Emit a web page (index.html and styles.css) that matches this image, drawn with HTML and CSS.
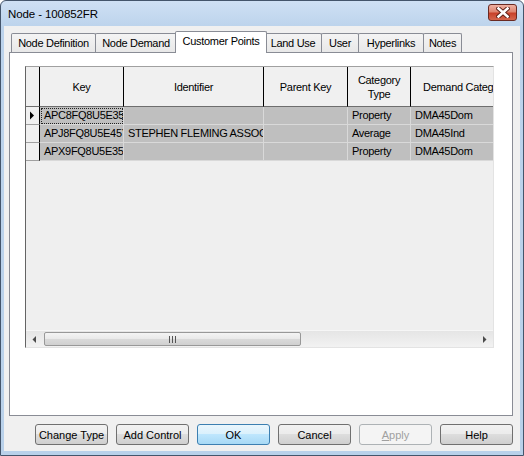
FILE: index.html
```html
<!DOCTYPE html>
<html>
<head>
<meta charset="utf-8">
<link rel="stylesheet" href="styles.css">
</head>
<body>
<div class="window">
  <div class="titlebar">
    <span class="title">Node - 100852FR</span>
    <div class="close">
      <svg width="14" height="11" viewBox="0 0 14 11"><path d="M2.5 1.5 L11.5 9.5 M11.5 1.5 L2.5 9.5" stroke="#5a1d14" stroke-width="4.4" stroke-linecap="square"/><path d="M2.5 1.5 L11.5 9.5 M11.5 1.5 L2.5 9.5" stroke="#fff" stroke-width="2.6" stroke-linecap="square"/></svg>
    </div>
  </div>
  <div class="face">
    <div class="tabstrip">
      <div class="tab t1">Node Definition</div>
      <div class="tab t2">Node Demand</div>
      <div class="tab active t3">Customer Points</div>
      <div class="tab t4">Land Use</div>
      <div class="tab t5">User</div>
      <div class="tab t6">Hyperlinks</div>
      <div class="tab t7">Notes</div>
    </div>
    <div class="page">
      <div class="grid">
        <div class="table">
          <div class="c h rh"></div>
          <div class="c h">Key</div>
          <div class="c h">Identifier</div>
          <div class="c h">Parent Key</div>
          <div class="c h">Category<br>Type</div>
          <div class="c h hl">Demand Category</div>

          <div class="c rh"><svg width="6" height="9" viewBox="0 0 6 9"><path d="M1 0.5 L5 4.5 L1 8.5 Z" fill="#000"/></svg></div>
          <div class="c d focus">APC8FQ8U5E35S</div>
          <div class="c d"></div>
          <div class="c d"></div>
          <div class="c d">Property</div>
          <div class="c d">DMA45Dom</div>

          <div class="c rh"></div>
          <div class="c d">APJ8FQ8U5E45Y</div>
          <div class="c d">STEPHEN FLEMING ASSOCIATES</div>
          <div class="c d"></div>
          <div class="c d">Average</div>
          <div class="c d">DMA45Ind</div>

          <div class="c rh"></div>
          <div class="c d">APX9FQ8U5E35T</div>
          <div class="c d"></div>
          <div class="c d"></div>
          <div class="c d">Property</div>
          <div class="c d">DMA45Dom</div>
        </div>
        <div class="filler"></div>
        <div class="hscroll">
          <div class="arrow"><svg width="5" height="7" viewBox="0 0 5 7"><path d="M4 0 L0.5 3.5 L4 7 Z" fill="#4a4a4a"/></svg></div>
          <div class="track">
            <div class="thumb"><svg width="7" height="7" viewBox="0 0 7 7"><path d="M0.5 0 V7 M3.5 0 V7 M6.5 0 V7" stroke="#555" stroke-width="1"/></svg></div>
          </div>
          <div class="arrow"><svg width="5" height="7" viewBox="0 0 5 7"><path d="M1 0 L4.5 3.5 L1 7 Z" fill="#4a4a4a"/></svg></div>
        </div>
      </div>
    </div>
    <div class="buttons">
      <button class="btn">Change Type</button>
      <button class="btn">Add Control</button>
      <button class="btn default">OK</button>
      <button class="btn">Cancel</button>
      <button class="btn disabled"><span class="u">A</span>pply</button>
      <button class="btn">Help</button>
    </div>
  </div>
</div>
</body>
</html>
```

FILE: styles.css
```css
html, body {
  margin: 0;
  padding: 0;
}
body {
  width: 524px;
  height: 456px;
  overflow: hidden;
  background: #ffffff;
  font-family: "Liberation Sans", Arial, sans-serif;
  font-size: 11px;
  color: #000;
}
.window {
  box-sizing: border-box;
  width: 524px;
  height: 456px;
  border: 1px solid #44556b;
  border-radius: 6px 6px 0 0;
  background: linear-gradient(#cfe0f4, #bcd3ec 26px, #b9d1ea);
  padding: 0 3px 4px 3px;
  display: flex;
  flex-direction: column;
}
.titlebar {
  height: 25px;
  display: flex;
  align-items: center;
  padding: 0 3px 0 4px;
}
.title {
  font-size: 11.5px;
  margin-top: 1px;
  letter-spacing: -0.1px;
}
.close {
  margin-left: auto;
  align-self: flex-start;
  margin-top: 3px;
  box-sizing: border-box;
  width: 29px;
  height: 17px;
  border: 1px solid #6a2a22;
  border-radius: 3px;
  background: linear-gradient(#eeb0a2 0%, #de8570 45%, #c8412a 55%, #d4674e 100%);
  display: flex;
  align-items: center;
  justify-content: center;
}
.face {
  flex: 1;
  background: #f0f0f0;
  display: flex;
  flex-direction: column;
  padding: 5px 7px 0 5px;
}
.tabstrip {
  height: 21px;
  display: flex;
  align-items: flex-end;
  padding-left: 2px;
  letter-spacing: -0.3px;
}
.tab {
  box-sizing: border-box;
  height: 19px;
  border: 1px solid #898c95;
  border-bottom: none;
  border-radius: 2px 2px 0 0;
  background: linear-gradient(#f4f4f4, #e8e8e8);
  text-align: center;
  line-height: 18px;
  margin-left: -1px;
  white-space: nowrap;
}
.t1 { width: 85px; margin-left: 0; }
.t2 { width: 82px; }
.t3 { width: 92px; }
.t4 { width: 58px; }
.t5 { width: 38px; }
.t6 { width: 66px; }
.t7 { width: 39px; }
.tab.active {
  height: 22px;
  background: #ffffff;
  margin-left: -2px;
  margin-right: -2px;
  margin-bottom: -1px;
  position: relative;
  z-index: 1;
  line-height: 18px;
}
.page {
  box-sizing: border-box;
  height: 364px;
  border: 1px solid #898c95;
  background: #ffffff;
  padding: 13px 0 0 15px;
}
.grid {
  box-sizing: border-box;
  width: 469px;
  height: 282px;
  border-left: 1px solid #646464;
  border-top: 1px solid #a0a0a0;
  border-right: 1px solid #e3e3e3;
  border-bottom: 1px solid #e3e3e3;
  background: #efefef;
  display: flex;
  flex-direction: column;
  overflow: hidden;
  letter-spacing: -0.3px;
}
.table {
  display: grid;
  grid-template-columns: 14px 84px 140px 84px 63px 120px;
  grid-template-rows: 40px 18px 18px 18px;
  width: 467px;
  overflow: hidden;
}
.c {
  box-sizing: border-box;
  border-right: 1px solid #a0a0a0;
  border-bottom: 1px solid #a0a0a0;
  overflow: hidden;
  white-space: nowrap;
}
.h {
  background: #f0f0f0;
  border-right-color: #000;
  border-bottom-color: #6e6e6e;
  display: flex;
  align-items: center;
  justify-content: center;
  text-align: center;
  line-height: 14px;
}
.hl {
  justify-content: flex-start;
  padding-left: 12px;
}
.rh {
  background: #f0f0f0;
  border-right-color: #000;
  display: flex;
  align-items: center;
  padding-left: 3px;
}
.d {
  background: #bfbfbf;
  border-color: #d9d9d9;
  line-height: 17px;
  padding-left: 4px;
}
.focus {
  outline: 1px dotted #222;
  outline-offset: -2px;
}
.filler {
  flex: 1;
}
.hscroll {
  height: 17px;
  display: flex;
  align-items: center;
  background: linear-gradient(#e5e5e5, #f2f2f2);
  border-top: 1px solid #f6f6f6;
  box-sizing: border-box;
}
.arrow {
  width: 17px;
  height: 16px;
  display: flex;
  align-items: center;
  justify-content: center;
}
.track {
  flex: 1;
  height: 16px;
  display: flex;
  align-items: center;
  padding-left: 1px;
}
.thumb {
  box-sizing: border-box;
  width: 257px;
  height: 14px;
  border: 1px solid #989898;
  border-radius: 2px;
  background: linear-gradient(#f4f4f4 0%, #e9e9e9 50%, #dadada 50%, #d0d0d0 100%);
  display: flex;
  align-items: center;
  justify-content: center;
}
.buttons {
  display: flex;
  justify-content: flex-end;
  gap: 8px;
  margin-top: 8px;
}
.btn {
  box-sizing: border-box;
  width: 73px;
  height: 21px;
  padding: 0;
  border: 1px solid #707070;
  border-radius: 3px;
  background: linear-gradient(#f2f2f2 0%, #ebebeb 50%, #dddddd 50%, #cfcfcf 100%);
  font-family: "Liberation Sans", Arial, sans-serif;
  font-size: 11px;
  color: #000;
}
.btn.default {
  border-color: #3c7fb1;
  background: linear-gradient(#eaf6fd 0%, #d9f0fc 50%, #bee6fd 50%, #a7d9f5 100%);
}
.btn.disabled {
  border-color: #adb2b5;
  background: #f4f4f4;
  color: #a0a0a0;
}
.u {
  text-decoration: underline;
}
```
